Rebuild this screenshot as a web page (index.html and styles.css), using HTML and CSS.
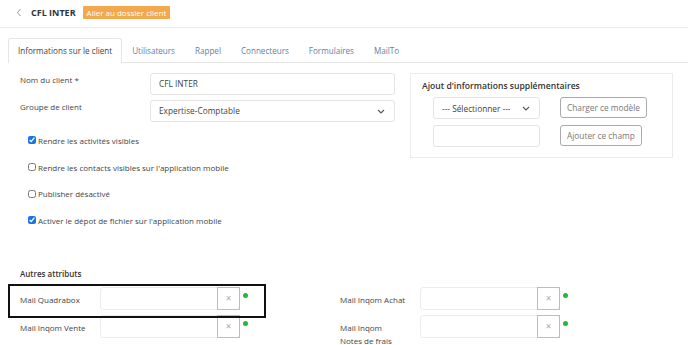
FILE: index.html
```html
<!DOCTYPE html>
<html lang="fr">
<head>
  <meta charset="UTF-8" />
  <title>CFL INTER</title>
  <link rel="stylesheet" href="styles.css">
</head>
<body>
  <!-- Header -->
  <div class="topbar">
    <span class="back">
      <svg width="6" height="9" viewBox="0 0 6 9"><path d="M4.5 1 L1.5 4.5 L4.5 8" fill="none" stroke="#999" stroke-width="1"/></svg>
    </span>
    <span class="client-name">CFL INTER</span>
    <span class="badge">Aller au dossier client</span>
  </div>

  <div class="page">
    <!-- Tabs -->
    <ul class="tabs">
      <li class="tab active">Informations sur le client</li>
      <li class="tab">Utilisateurs</li>
      <li class="tab">Rappel</li>
      <li class="tab">Connecteurs</li>
      <li class="tab">Formulaires</li>
      <li class="tab">MailTo</li>
    </ul>

    <div class="panel">
      <div class="top-row">
        <div class="client-form">
          <div class="form-row">
            <label>Nom du client *</label>
            <div class="field">CFL INTER</div>
          </div>
          <div class="form-row">
            <label>Groupe de client</label>
            <div class="field select">
              Expertise-Comptable
              <svg class="caret" width="8" height="5" viewBox="0 0 8 5"><path d="M1 1 L4 4 L7 1" fill="none" stroke="#555" stroke-width="1.1"/></svg>
            </div>
          </div>

          <div class="checks">
            <label class="check"><input type="checkbox" checked> Rendre les activités visibles</label>
            <label class="check"><input type="checkbox"> Rendre les contacts visibles sur l'application mobile</label>
            <label class="check"><input type="checkbox"> Publisher désactivé</label>
            <label class="check"><input type="checkbox" checked> Activer le dépot de fichier sur l'application mobile</label>
          </div>
        </div>

        <div class="extra-box">
          <h3>Ajout d'informations supplémentaires</h3>
          <div class="extra-row">
            <div class="small-field select">
              --- Sélectionner ---
              <svg class="caret" width="8" height="5" viewBox="0 0 8 5"><path d="M1 1 L4 4 L7 1" fill="none" stroke="#555" stroke-width="1.1"/></svg>
            </div>
            <button class="btn">Charger ce modèle</button>
          </div>
          <div class="extra-row">
            <div class="small-field"></div>
            <button class="btn">Ajouter ce champ</button>
          </div>
        </div>
      </div>

      <!-- Other attributes -->
      <div class="attributes">
        <h4>Autres attributs</h4>
        <div class="attr-grid">
          <div class="attr">
            <label>Mail Quadrabox</label>
            <div class="attr-input"><span class="clear">×</span></div>
            <span class="dot"></span>
          </div>
          <div class="attr">
            <label>Mail Inqom Achat</label>
            <div class="attr-input"><span class="clear">×</span></div>
            <span class="dot"></span>
          </div>
          <div class="attr">
            <label>Mail Inqom Vente</label>
            <div class="attr-input"><span class="clear">×</span></div>
            <span class="dot"></span>
          </div>
          <div class="attr">
            <label>Mail Inqom<br>Notes de frais</label>
            <div class="attr-input"><span class="clear">×</span></div>
            <span class="dot"></span>
          </div>
        </div>
        <div class="highlight"></div>
      </div>
    </div>
  </div>
</body>
</html>
```

FILE: styles.css
```css
* {
  box-sizing: border-box;
  margin: 0;
  padding: 0;
}
body {
  font-family: 'Open Sans', 'Noto Sans', Arial, sans-serif;
  font-size: 8px;
  color: #444;
  background-color: #fff;
  width: 688px;
  height: 345px;
  overflow: hidden;
}
.topbar {
  height: 28px;
  display: flex;
  align-items: center;
  padding: 0 0 2px 16px;
  border-bottom: 1px solid #ececec;
}
.back {
  display: flex;
  width: 15px;
}
.client-name {
  font-size: 9px;
  font-weight: 700;
  color: #333;
  margin-right: 7px;
}
.badge {
  background-color: #f2a84c;
  color: #fff;
  font-size: 8px;
  padding: 0 4px;
  line-height: 13px;
  border-radius: 1px;
}
.page {
  padding: 10px 0 0 8px;
}
.tabs {
  list-style: none;
  display: flex;
  border-bottom: 1px solid #e6e6e6;
}
.tab {
  padding: 0 9px;
  height: 24px;
  line-height: 23px;
  font-size: 8.1px;
  color: #5f7fa8;
  border: 1px solid transparent;
  border-bottom: none;
}
.tab.active {
  color: #444;
  border-color: #e6e6e6;
  border-radius: 3px 3px 0 0;
  background-color: #fff;
  margin-bottom: -1px;
  height: 25px;
}
.panel {
  padding: 10px 0 0 12px;
}
.top-row {
  display: flex;
  align-items: flex-start;
}
.client-form {
  width: 375px;
}
.form-row {
  display: flex;
  align-items: flex-start;
  margin-bottom: 5px;
}
.form-row label {
  width: 130px;
  padding-top: 1px;
  color: #444;
}
.field {
  flex: 1;
  height: 22px;
  border: 1px solid #e4e4e4;
  border-radius: 3px;
  padding: 0 8px;
  line-height: 20px;
  font-size: 8.3px;
  color: #444;
  display: flex;
  align-items: center;
}
.select {
  justify-content: space-between;
}
.caret {
  margin-right: 1px;
}
.checks {
  padding: 0 0 0 8px;
}
.check {
  display: flex;
  align-items: center;
  height: 26.7px;
  color: #444;
}
.check input {
  width: 8px;
  height: 8px;
  margin: 0 2px 0 0;
  accent-color: #1a73e8;
}
.extra-box {
  margin-left: 15px;
  width: 263px;
  height: 85px;
  border: 1px solid #ececec;
  padding: 6px 0 0 11px;
}
.extra-box h3 {
  font-size: 8.6px;
  font-weight: 600;
  color: #333;
  margin-bottom: 5px;
}
.extra-row {
  display: flex;
  align-items: flex-start;
  padding-left: 11px;
  margin-bottom: 6px;
}
.small-field {
  width: 107px;
  height: 22px;
  border: 1px solid #e4e4e4;
  border-radius: 3px;
  padding: 0 8px;
  font-size: 8.3px;
  color: #444;
  display: flex;
  align-items: center;
}
.btn {
  margin-left: 20px;
  height: 21px;
  padding: 0 6px;
  font-family: inherit;
  font-size: 8.3px;
  color: #777;
  background-color: #fff;
  border: 1px solid #aaa;
  border-radius: 3px;
}
.attributes {
  position: relative;
  margin-top: 34px;
}
.attributes h4 {
  font-size: 8px;
  font-weight: 600;
  color: #333;
  margin-bottom: 8px;
}
.attr-grid {
  display: grid;
  grid-template-columns: 320px 320px;
  row-gap: 5px;
}
.attr {
  display: flex;
  align-items: flex-start;
}
.attr label {
  width: 80px;
  padding: 6px 8px 0 0;
  line-height: 13px;
  color: #444;
}
.attr-input {
  width: 140px;
  height: 23px;
  border: 1px solid #ececec;
  border-radius: 3px;
  display: flex;
  justify-content: flex-end;
}
.clear {
  width: 23px;
  margin: -1px -1px -1px 0;
  border: 1px solid #bdbdbd;
  color: #aaa;
  font-size: 10px;
  display: flex;
  align-items: center;
  justify-content: center;
}
.dot {
  width: 5px;
  height: 5px;
  border-radius: 50%;
  background-color: #22b83a;
  margin: 6px 0 0 3px;
}
.highlight {
  position: absolute;
  left: -12px;
  top: 16px;
  width: 258px;
  height: 34px;
  border: 2.5px solid #111;
}
```
